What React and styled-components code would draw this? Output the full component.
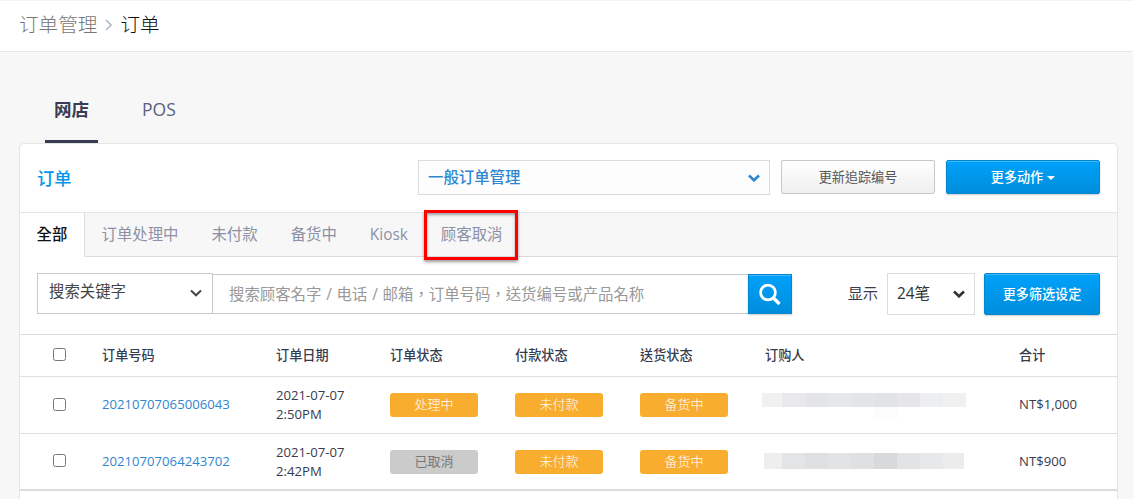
import React, { useState } from 'react';
import styled, { createGlobalStyle } from 'styled-components';

const GlobalStyle = createGlobalStyle`
  * {
    box-sizing: border-box;
  }

  body {
    margin: 0;
    height: 499px;
    overflow: hidden;
    background: #f7f7f7;
    color: #373b4d;
    font-family: 'Open Sans', 'Noto Sans CJK TC', sans-serif;
    font-size: 13px;
  }

  button, input {
    font-family: inherit;
  }
`;

const Page = styled.div`
  height: 499px;
  overflow: hidden;
`;

const Header = styled.header`
  display: flex;
  align-items: center;
  height: 52px;
  padding: 0 19px 3px;
  background: #fff;
  border-top: 1px solid #f4f4f4;
  border-bottom: 1px solid #e5e5e5;
  font-size: 19.6px;
  font-weight: 300;
  line-height: 28px;
`;

const Crumb = styled.span`
  color: ${props => props.$current ? '#111' : '#777'};
`;

const CrumbArrow = styled.svg`
  margin: 0 8px 0 8px;
`;

const Channels = styled.nav`
  display: flex;
  gap: 35px;
  height: 91px;
  padding: 42px 45px 0;
`;

const Channel = styled.button`
  height: 49px;
  padding: 0 9px 15px;
  background: none;
  border: none;
  border-bottom: 3px solid ${props => props.$active ? '#373b53' : 'transparent'};
  color: ${props => props.$active ? '#373b53' : '#5a6182'};
  font-size: 17.5px;
  font-weight: ${props => props.$active ? 700 : 400};
  line-height: 29px;
`;

const Card = styled.main`
  width: 1099px;
  height: 380px;
  margin-left: 19px;
  background: #fff;
  border: 1px solid #e5e5e5;
  border-radius: 5px 5px 0 0;
`;

const Toolbar = styled.div`
  display: flex;
  align-items: flex-start;
  height: 69px;
  padding: 16px 17px 0;
  border-bottom: 1px solid #e5e5e5;
`;

const Title = styled.h1`
  flex: 1;
  margin: 0;
  color: #0295e8;
  font-size: 17.3px;
  font-weight: 500;
  line-height: 38px;
`;

const Select = styled.button`
  display: flex;
  align-items: center;
  justify-content: space-between;
  width: ${props => props.$width}px;
  height: ${props => props.$height}px;
  padding: 0 9px 3px;
  background: #fff;
  border: 1px solid #dcdcdc;
  color: #333;
  font-size: 15.4px;

  svg {
    margin-top: 3px;
  }
`;

const ModeSelect = styled(Select)`
  margin-right: 11px;
  background: #fdfdfd;
  color: #2e86d1;
  font-weight: 500;
`;

const KeywordSelect = styled(Select)`
  padding: 0 10px 6px 11px;
  border-color: #c8c8c8;
  color: #444;

  svg {
    margin-top: 5px;
  }
`;

const Button = styled.button`
  display: flex;
  align-items: center;
  justify-content: center;
  gap: 4px;
  width: ${props => props.$width}px;
  height: ${props => props.$height}px;
  padding: 0 0 2px;
  background: linear-gradient(#fff, #efefef);
  border: 1px solid #c8c8c8;
  border-radius: 2px;
  color: #555;
  font-size: 13.1px;
`;

const PrimaryButton = styled(Button)`
  background: linear-gradient(#00a1fb, #008edc);
  border-color: #0286cf;
  box-shadow: inset 0 1px 0 rgba(255, 255, 255, 0.25), 0 1px 2px rgba(0, 0, 0, 0.2);
  color: #fff;
  font-weight: 500;
`;

const SearchButton = styled(PrimaryButton)`
  padding: 0;
  border-radius: 0;
`;

const Caret = styled.span`
  margin-top: 3px;
  border-top: 4px solid #fff;
  border-left: 4px solid transparent;
  border-right: 4px solid transparent;
`;

const Spacer = styled.div`
  width: 11px;
`;

const Tabs = styled.div`
  display: flex;
  height: 44px;
  background: #f7f7f7;
`;

const Tab = styled.button`
  position: relative;
  height: 44px;
  padding: 0 16.5px;
  background: none;
  border: none;
  border-bottom: 1px solid #dcdcdc;
  color: #8c91a5;
  font-size: 15.4px;
  line-height: 42px;
  white-space: nowrap;

  ${props => props.$active && `
    width: 65px;
    background: #fff;
    border-bottom-color: #fff;
    border-right: 1px solid #dcdcdc;
    color: #111;
    font-weight: 500;
  `}
`;

const TabsRest = styled.div`
  flex: 1;
  border-bottom: 1px solid #dcdcdc;
`;

const Highlight = styled.span`
  position: absolute;
  top: -3px;
  left: 0;
  width: 94px;
  height: 50px;
  border: 3px solid #fe0000;
  box-shadow: 0 2px 3px rgba(0, 0, 0, 0.4), inset 0 2px 3px rgba(0, 0, 0, 0.35);
`;

const Filters = styled.div`
  display: flex;
  align-items: flex-start;
  height: 77px;
  padding: 16px 17px 0;
`;

const SearchInput = styled.input`
  width: 535px;
  height: 40px;
  margin-top: 1px;
  padding: 0 16px;
  border: 1px solid #c8c8c8;
  border-left: none;
  border-right: none;
  outline: none;
  font-size: 15.4px;
  word-spacing: 0.8px;

  &::placeholder {
    color: #999;
    opacity: 1;
  }
`;

const SearchWrap = styled.div`
  padding-top: 1px;
`;

const ShowLabel = styled.span`
  margin: 0 9px 0 auto;
  font-size: 15.2px;
  line-height: 41px;
`;

const PageSize = styled(Select)`
  margin-right: 9px;
`;

const Row = styled.div`
  display: grid;
  grid-template-columns: 82px 174px 114px 125px 125px 125px 254px 1fr;
  align-items: center;
  height: ${props => props.$height}px;
  border-top: 1px solid ${props => props.$head ? '#dcdcdc' : '#e0e0e0'};
  font-size: 13.15px;
  font-weight: ${props => props.$head ? 500 : 400};
  line-height: 19px;
`;

const LastLine = styled.div`
  height: 2px;
  background: #dcdcdc;
`;

const Checkbox = styled.input`
  width: 13px;
  height: 13px;
  margin: 0 0 2px 33px;
  appearance: none;
  background: #fff;
  border: 1px solid #767676;
  border-radius: 2.5px;
`;

const OrderLink = styled.a`
  padding-bottom: 1px;
  color: #2e86d1;
  text-decoration: none;
`;

const Total = styled.span`
  padding-bottom: 1px;
`;

const Badge = styled.span`
  width: 88px;
  height: 24px;
  border-radius: 3px;
  background: ${props => props.$muted ? '#cbcbcb' : '#f9ad2f'};
  color: ${props => props.$muted ? '#777' : '#fff'};
  font-size: 13px;
  font-weight: ${props => props.$muted ? 400 : 300};
  line-height: 23px;
  text-align: center;
`;

const Mask = styled.div`
  position: relative;
  display: flex;
  height: ${props => props.$height}px;
  margin: 0 0 ${props => props.$raise}px ${props => props.$offset}px;
`;

const MaskBlock = styled.span`
  width: ${props => props.$width}px;
  background: ${props => props.$color};
`;

const MaskTail = styled.span`
  position: absolute;
  top: 14px;
  left: 112px;
  width: 23px;
  height: 13px;
  background: #fcfcfc;
`;

const tabs = ['全部', '订单处理中', '未付款', '备货中', 'Kiosk', '顾客取消'];

const orders = [
  {
    id: '20210707065006043',
    date: '2021-07-07',
    time: '2:50PM',
    status: '处理中',
    payment: '未付款',
    delivery: '备货中',
    total: 'NT$1,000',
    mask: {
      offset: -3,
      height: 14,
      raise: 10,
      tail: true,
      widths: [20, 23, 23, 23, 23, 23, 23, 23, 23],
      colors: ['#f1f1f1', '#e9e9eb', '#e4e5e7', '#e6e7e9', '#e4e5e8', '#e2e3e5', '#e6e6e8', '#edeef0', '#f1f1f1'],
    },
  },
  {
    id: '20210707064243702',
    date: '2021-07-07',
    time: '2:42PM',
    status: '已取消',
    cancelled: true,
    payment: '未付款',
    delivery: '备货中',
    total: 'NT$900',
    mask: {
      offset: -1,
      height: 16,
      raise: 1,
      widths: [18, 23, 23, 23, 23, 23, 23, 23, 21],
      colors: ['#eeeeee', '#e3e4e6', '#dfe0e2', '#e2e3e5', '#dfe0e2', '#d8d9db', '#e2e3e5', '#e7e8ea', '#ececec'],
    },
  },
];

const Chevron = ({ color = '#333', stroke = 2.6, size = 12 }) => (
  <svg width={size} height="8" viewBox="0 0 12 8" fill="none">
    <path d="M1 1.5L6 6.3L11 1.5" stroke={color} strokeWidth={stroke} />
  </svg>
);

const App = () => {
  const [activeTab, setActiveTab] = useState('全部');
  const [channel, setChannel] = useState('网店');

  return (
    <Page>
      <GlobalStyle />
      <Header>
        <Crumb>订单管理</Crumb>
        <CrumbArrow width="7" height="12" viewBox="0 0 7 12" fill="none">
          <path d="M1 1L6 6L1 11" stroke="#b4bccb" strokeWidth="1.7" />
        </CrumbArrow>
        <Crumb $current>订单</Crumb>
      </Header>

      <Channels>
        {['网店', 'POS'].map(name => (
          <Channel key={name} $active={channel === name} onClick={() => setChannel(name)}>{name}</Channel>
        ))}
      </Channels>

      <Card>
        <Toolbar>
          <Title>订单</Title>
          <ModeSelect $width={352} $height={35}>
            一般订单管理
            <Chevron color="#2e86d1" />
          </ModeSelect>
          <Button $width={154} $height={34}>更新追踪编号</Button>
          <Spacer />
          <PrimaryButton $width={154} $height={34}>
            更多动作
            <Caret />
          </PrimaryButton>
        </Toolbar>

        <Tabs>
          {tabs.map(name => (
            <Tab key={name} $active={activeTab === name} onClick={() => setActiveTab(name)}>
              {name}
              {name === '顾客取消' && <Highlight />}
            </Tab>
          ))}
          <TabsRest />
        </Tabs>

        <Filters>
          <KeywordSelect $width={176} $height={41}>
            搜索关键字
            <Chevron color="#444" stroke={2} />
          </KeywordSelect>
          <SearchInput placeholder="搜索顾客名字 / 电话 / 邮箱，订单号码，送货编号或产品名称" />
          <SearchWrap>
            <SearchButton $width={44} $height={40}>
              <svg width="22" height="22" viewBox="0 0 22 22" fill="none" stroke="#fff">
                <circle cx="9" cy="9.5" r="7.4" strokeWidth="2.8" />
                <path d="M14.5 15L20.5 21" strokeWidth="3.4" />
              </svg>
            </SearchButton>
          </SearchWrap>
          <ShowLabel>显示</ShowLabel>
          <PageSize $width={88} $height={42}>
            24笔
            <Chevron />
          </PageSize>
          <PrimaryButton $width={116} $height={42}>更多筛选设定</PrimaryButton>
        </Filters>

        <Row $head $height={42}>
          <Checkbox type="checkbox" />
          <span>订单号码</span>
          <span>订单日期</span>
          <span>订单状态</span>
          <span>付款状态</span>
          <span>送货状态</span>
          <span>订购人</span>
          <span>合计</span>
        </Row>
        {orders.map((order, index) => (
          <Row key={order.id} $height={index === 0 ? 57 : 56}>
            <Checkbox type="checkbox" />
            <OrderLink href="#">{order.id}</OrderLink>
            <span>
              {order.date}
              <br />
              {order.time}
            </span>
            <Badge $muted={order.cancelled}>{order.status}</Badge>
            <Badge>{order.payment}</Badge>
            <Badge>{order.delivery}</Badge>
            <Mask $offset={order.mask.offset} $height={order.mask.height} $raise={order.mask.raise}>
              {order.mask.colors.map((color, i) => (
                <MaskBlock key={i} $color={color} $width={order.mask.widths[i]} />
              ))}
              {order.mask.tail && <MaskTail />}
            </Mask>
            <Total>{order.total}</Total>
          </Row>
        ))}
        <LastLine />
      </Card>
    </Page>
  );
};

export default App;
